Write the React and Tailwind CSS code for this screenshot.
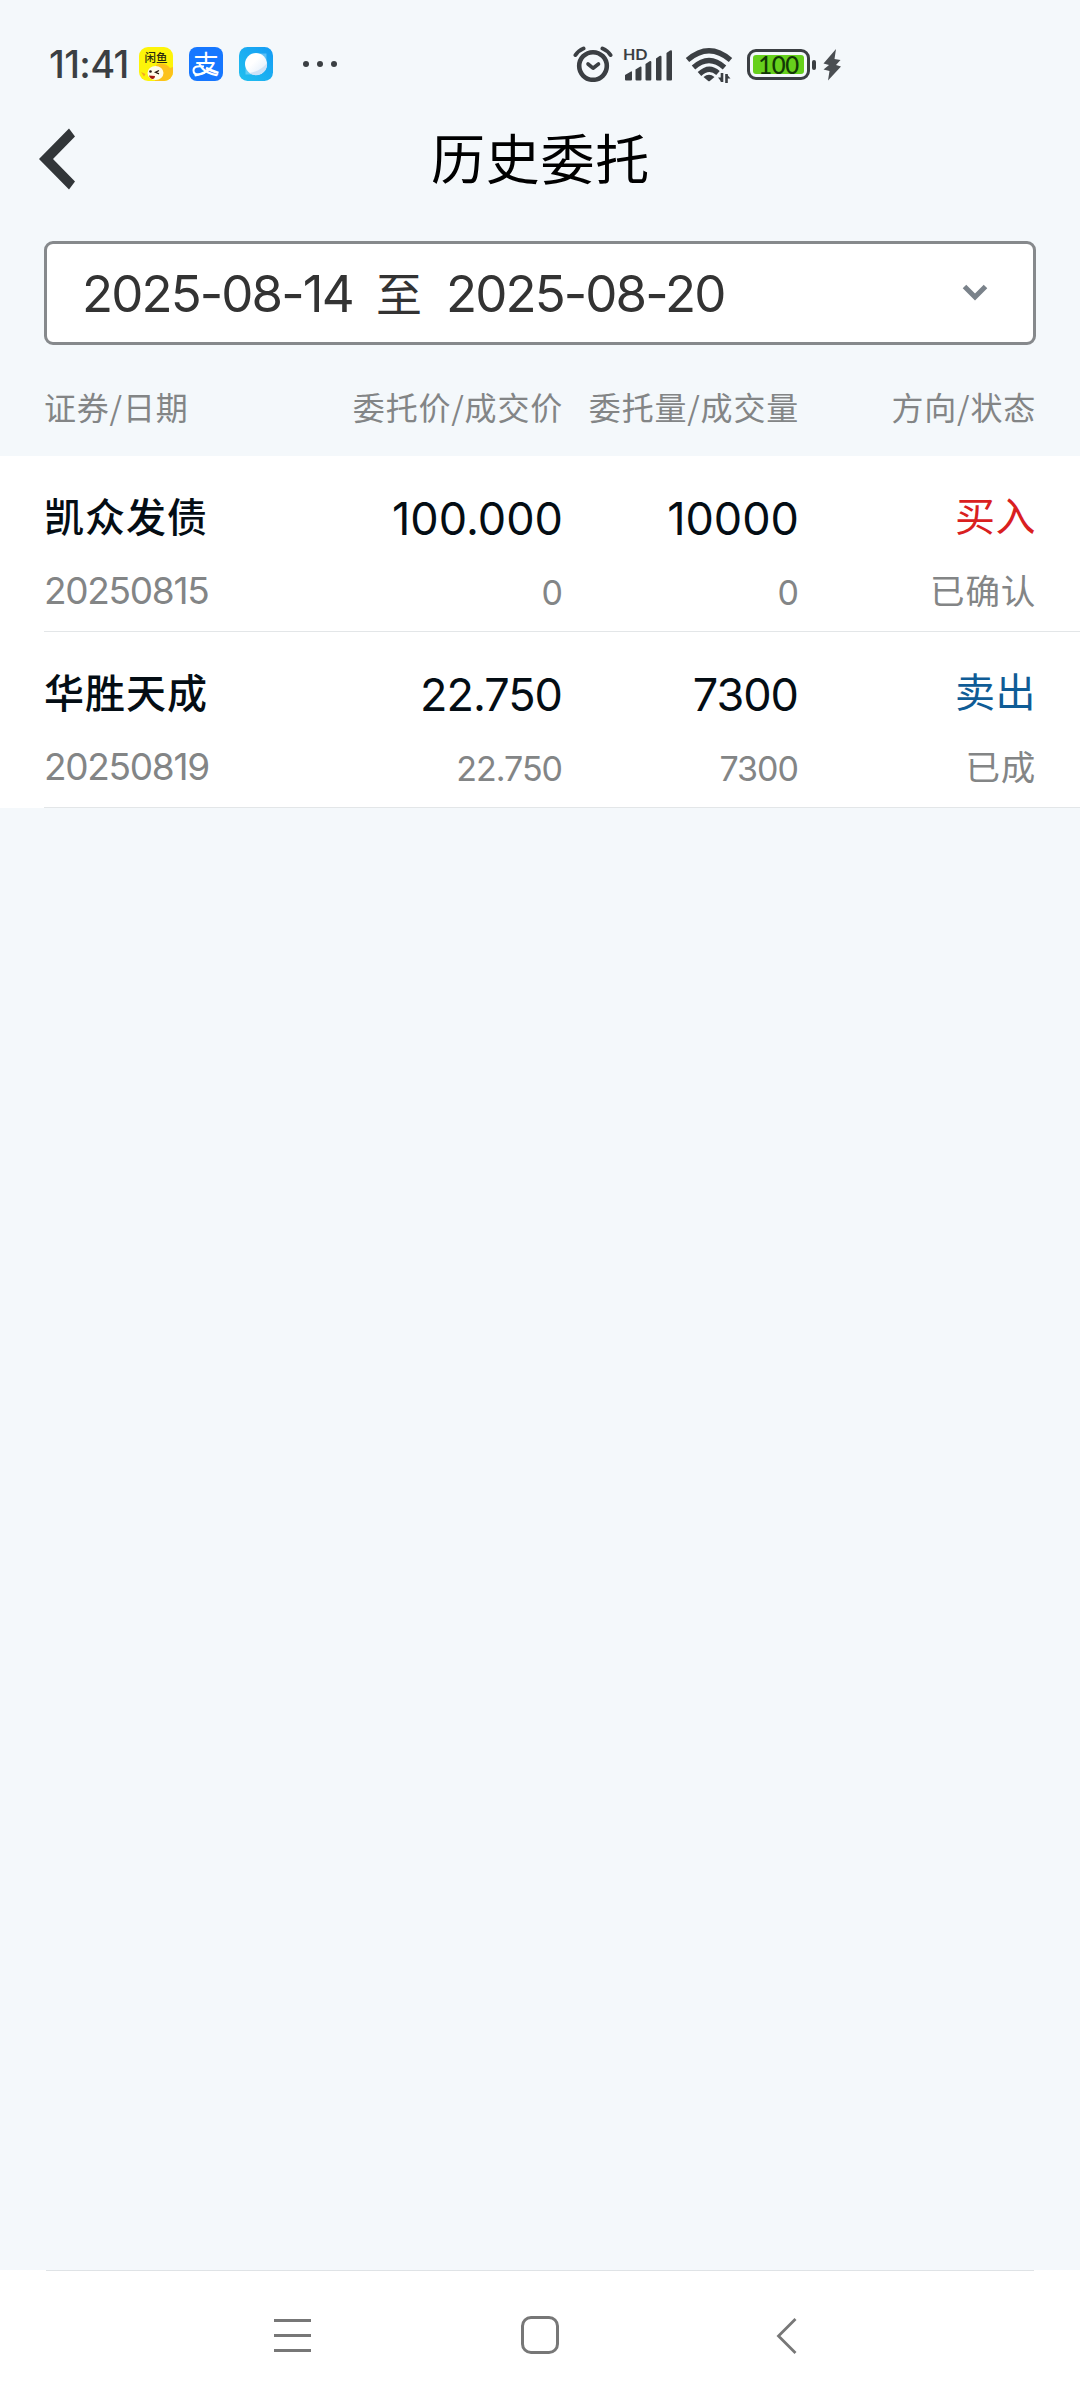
import React from "react";

const orders = [
  {
    name: "凯众发债",
    date: "20250815",
    price: "100.000",
    dealPrice: "0",
    amount: "10000",
    dealAmount: "0",
    side: "buy",
    status: "已确认",
  },
  {
    name: "华胜天成",
    date: "20250819",
    price: "22.750",
    dealPrice: "22.750",
    amount: "7300",
    dealAmount: "7300",
    side: "sell",
    status: "已成",
  },
];

function XianyuIcon() {
  return (
    <div className="relative w-[34px] h-[34px] rounded-[9px] bg-[#fdf40a]">
      <svg className="absolute inset-0 rounded-[9px]" width="34" height="34" viewBox="0 0 34 34">
        <path d="M17 18q8-4 14 3l3-1v14H16z" fill="#fcc21b" />
        <ellipse cx="16.500" cy="26" rx="8" ry="7" fill="#fffbe8" />
        <path d="M2 25l4.500 2-1.500 2.500z" fill="#f5a623" />
        <circle cx="11.500" cy="24.500" r="1.300" fill="#2b1a10" />
        <path d="M20 23.500l-3.500 1.800 3.500 1.500" fill="none" stroke="#2b1a10" strokeWidth="1.300" />
        <path d="M10 28.500l6 .5c0 4-5 4-6-.5z" fill="#a3180c" />
      </svg>
      <div className="relative pt-[2px] text-center text-[11.5px] leading-[17px] font-medium text-[#2a2a10]">
        闲鱼
      </div>
    </div>
  );
}

function AlipayIcon() {
  return (
    <div className="relative w-[34px] h-[34px] rounded-[8px] bg-[#1677ff] text-center text-white text-[26px] leading-[31px]">
      支
      <svg className="absolute inset-0" width="34" height="34" viewBox="0 0 34 34" fill="none" stroke="#fff">
        <path d="M15 19.500Q4.500 18 4.500 23.500q0 4 5 4 6 0 9.500-5" strokeWidth="2" />
        <path d="M17 21q6 3 12.500 5" strokeWidth="2.600" />
      </svg>
    </div>
  );
}

function BrowserIcon() {
  return (
    <svg width="34" height="34" viewBox="0 0 34 34">
      <defs>
        <linearGradient id="globeBg" x1="0" y1="1" x2="1" y2="0">
          <stop offset="0" stopColor="#22c0ee" />
          <stop offset="1" stopColor="#149bf5" />
        </linearGradient>
        <linearGradient id="globeFill" x1="0" y1="0" x2="1" y2="1">
          <stop offset=".4" stopColor="#ffffff" />
          <stop offset="1" stopColor="#dceafa" />
        </linearGradient>
      </defs>
      <rect width="34" height="34" rx="8.5" fill="url(#globeBg)" />
      <path d="M6.500 21v6.500H13zM21 6.500h6.500V13z" fill="#fff" opacity=".3" />
      <circle cx="17" cy="17" r="11" fill="url(#globeFill)" />
      <path d="M28 16A11 11 0 0 1 10.500 26Q22 24 28 16z" fill="#cfe2f7" />
    </svg>
  );
}

function AlarmIcon() {
  return (
    <svg width="40" height="36" viewBox="0 0 40 36" fill="none" stroke="#3b3f43" strokeLinecap="round">
      <circle cx="20" cy="20" r="13.8" strokeWidth="4.600" />
      <path d="M2.500 9Q5.500 4.500 10.500 2.500M37.500 9Q34.500 4.500 29.500 2.500" strokeWidth="4" />
      <path d="M15 18l5 4.200 5.500-4.200" strokeWidth="3.6" strokeLinejoin="round" />
    </svg>
  );
}

function SignalIcon() {
  return (
    <div className="relative w-[50px] h-[34px]">
      <span className="absolute left-0 -top-[2px] font-['Lato'] text-[16px] leading-[16px] font-bold">HD</span>
      <svg width="50" height="34" viewBox="0 0 50 34" fill="#3b3f43">
        <path d="M2 27l6-3.500q1-.5 1 .5v7.500q0 1-1 1H3q-1 0-1-1z" />
        <path d="M12.500 21.500l4.500-2.800q1.500-.8 1.500 1v11.800q0 1-1 1h-4q-1 0-1-1z" />
        <path d="M22.500 16l4-2.700q1.800-1 1.800 1v17.200q0 1-1 1h-3.800q-1 0-1-1z" />
        <path d="M33 10.500l3.500-2.400q2-1 2 1v22.400q0 1-1 1H34q-1 0-1-1z" />
        <path d="M43.500 5l3.500-2.500q2-1 2 1v28q0 1-1 1h-3.500q-1 0-1-1z" />
      </svg>
    </div>
  );
}

function WifiIcon() {
  return (
    <svg width="48" height="36" viewBox="0 0 48 36" fill="none" stroke="#3b3f43" strokeWidth="5.200">
      <path d="M2.500 13Q24-5.500 45.500 13" />
      <path d="M8.500 20.500Q24 6.500 39.500 20.500" />
      <path d="M14.500 27Q24 18 33 26" />
      <path d="M18.500 30Q24 25.500 29.500 30L24.800 34q-.8.700-1.600 0z" fill="#3b3f43" stroke="none" />
      <path d="M37 26v9M41.500 36v-9" strokeWidth="2.600" />
      <path d="M33 30.500h3.500v4.500zM45.500 31.500h-4V27z" fill="#3b3f43" stroke="none" />
    </svg>
  );
}

function BatteryIcon() {
  return (
    <div className="flex items-center">
      <div className="w-[63px] h-[31px] rounded-[9px] border-[3.5px] border-[#3b3f43] p-[3px]">
        <div className="h-full rounded-[3px] bg-[#66d01c] flex items-center justify-center font-['Lato'] text-[24px] leading-[18px] text-[#123806] font-medium tracking-[-0.5px]">
          100
        </div>
      </div>
      <div className="ml-[2px] w-[4px] h-[10px] rounded-[2px] bg-[#3b3f43]" />
    </div>
  );
}

function StatusBar() {
  return (
    <div className="h-[128px] flex items-start pt-[47px] pl-[49px] text-[#3b3f43]">
      <div className="w-[90px] h-[34px] font-['Inter'] text-[38px] leading-[34px] font-medium tracking-[-0.6px]">
        11:41
      </div>
      <div className="flex gap-4">
        <XianyuIcon />
        <AlipayIcon />
        <BrowserIcon />
      </div>
      <div className="ml-[30px] h-[34px] flex items-center gap-2">
        <span className="w-[6px] h-[6px] rounded-full bg-[#3b3f43]" />
        <span className="w-[6px] h-[6px] rounded-full bg-[#3b3f43]" />
        <span className="w-[6px] h-[6px] rounded-full bg-[#3b3f43]" />
      </div>
      <div className="ml-[236px] -mt-px flex items-start">
        <AlarmIcon />
        <div className="ml-[10px] mt-[2px]">
          <SignalIcon />
        </div>
        <div className="ml-[12px] mt-px">
          <WifiIcon />
        </div>
        <div className="ml-[14px] mt-[3px]">
          <BatteryIcon />
        </div>
        <svg className="ml-[7px] mt-[3px]" width="18" height="32" viewBox="0 0 18 32" fill="#4a4e52">
          <path d="M13 0L.5 14.500l5.500 1.500-5.500 4.500 6 1.500L5 31.500 18 17.500l-5-1.500 4.500-5-6-1z" />
        </svg>
      </div>
    </div>
  );
}

function OrderRow({ order }) {
  const isBuy = order.side === "buy";
  // sell figures are set a little tighter
  const tracking = isBuy ? "tracking-normal" : "tracking-[-1px] pr-px";
  return (
    <div className="bg-white pl-[44px]">
      <div className="h-44 border-b border-[#e3e6e8] flex">
        <div className="w-[221px]">
          <div className="mt-[28px] h-[62px] leading-[62px] text-[40px] tracking-[1px] font-medium text-[#040d14]">
            {order.name}
          </div>
          <div className="mt-[14px] leading-[62px] h-[62px] font-['Inter'] text-[37px] tracking-[-1.3px] text-[#838586]">
            {order.date}
          </div>
        </div>
        <div className={"w-[298px] text-right font-['Inter'] " + tracking}>
          <div className="mt-[32px] h-[62px] leading-[62px] text-[45px] text-[#040d14]">
            {order.price}
          </div>
          <div className="mt-[12px] leading-[62px] h-[62px] text-[34px] text-[#838586]">
            {order.dealPrice}
          </div>
        </div>
        <div className={"w-[236px] text-right font-['Inter'] " + tracking}>
          <div className="mt-[32px] h-[62px] leading-[62px] text-[45px] text-[#040d14]">
            {order.amount}
          </div>
          <div className="mt-[12px] leading-[62px] h-[62px] text-[34px] text-[#838586]">
            {order.dealAmount}
          </div>
        </div>
        <div className="w-[237px] text-right">
          <div
            className={
              "mt-[27px] h-[62px] leading-[62px] text-[40px] tracking-[0.5px] " +
              (isBuy ? "text-[#d9201f]" : "text-[#0f5c96]")
            }
          >
            {isBuy ? "买入" : "卖出"}
          </div>
          <div className="mt-[13px] h-[62px] leading-[62px] text-[34.5px] tracking-[0.8px] text-[#838586]">
            {order.status}
          </div>
        </div>
      </div>
    </div>
  );
}

export default function App() {
  return (
    <div className="w-[1080px] h-[2400px] bg-[#f4f8fb] flex flex-col overflow-hidden font-['Noto_Sans_CJK_SC',sans-serif]">
      <StatusBar />

      <div className="h-[113px] flex items-start">
        <svg className="ml-[39px]" width="37" height="62" viewBox="0 0 37 62" fill="#323639">
          <path d="M30 .5L0 31l30 30.500 6-8L14 31 36 8.500z" />
        </svg>
        <h1 className="flex-1 pr-[75px] h-[62px] leading-[58px] text-center text-[54px] tracking-[0.8px] text-black">
          历史委托
        </h1>
      </div>

      <div className="mx-[44px] h-[104px] shrink-0 rounded-[9px] border-3 border-[#86898c] bg-white flex items-center justify-between pl-[35px] pr-[45px] text-[#333] text-[51px]">
        <div className="flex items-center h-[98px] leading-[98px]">
          <span className="w-[294px] pt-px font-['Inter'] tracking-[-1.9px]">2025-08-14</span>
          <span className="w-[70px] pb-[4px] text-[46px]">至</span>
          <span className="pt-px font-['Inter'] tracking-[-1.9px]">2025-08-20</span>
        </div>
        <svg width="26" height="18" viewBox="0 0 26 18" fill="none" stroke="#7a828a" strokeWidth="5">
          <path d="M2.500 2.500L13 13 23.500 2.500" />
        </svg>
      </div>

      <div className="h-[111px] shrink-0 pl-[44px] flex text-[32px] leading-[123px] tracking-[0.8px] text-[#838586]">
        <div className="w-[221px]">证券/日期</div>
        <div className="w-[298px] text-right">委托价/成交价</div>
        <div className="w-[236px] text-right">委托量/成交量</div>
        <div className="w-[237px] text-right">方向/状态</div>
      </div>

      {orders.map((order, i) => (
        <OrderRow order={order} key={i} />
      ))}

      <div className="flex-1" />

      <div className="h-[130px] bg-white shrink-0">
        <div className="mx-[46px] h-px bg-[#dfe3e6]" />
        <div className="h-[129px] flex items-start pt-[45px] pl-[274px] text-[#777]">
          <div className="mt-[3px] w-[37px] flex flex-col gap-3">
            <div className="h-[3px] bg-[#777]" />
            <div className="h-[3px] bg-[#777]" />
            <div className="h-[3px] bg-[#777]" />
          </div>
          <div className="ml-[210px] w-[38px] h-[38px] rounded-[10px] border-3 border-[#777]" />
          <svg className="ml-[217px] mt-[2px]" width="21" height="36" viewBox="0 0 21 36" fill="none" stroke="#777" strokeWidth="2.800">
            <path d="M19.500 1L2.500 18l17 17" />
          </svg>
        </div>
      </div>
    </div>
  );
}
